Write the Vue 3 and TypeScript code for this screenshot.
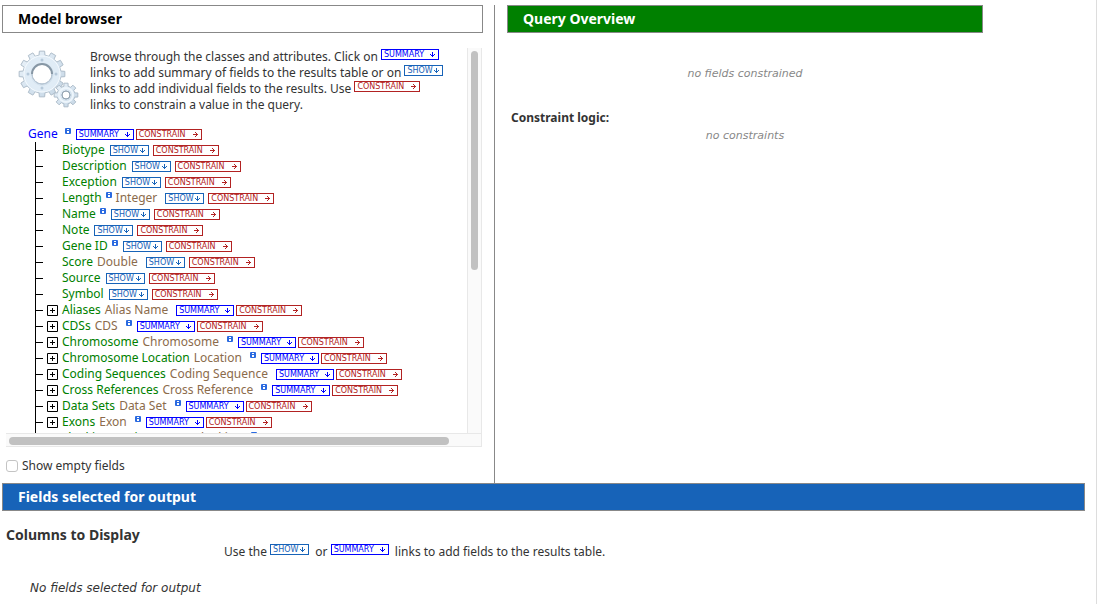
<script setup lang="ts">
import { h, type FunctionalComponent } from 'vue'

type Kind = 'summary' | 'show' | 'constrain'

interface TreeRow {
  name: string
  type?: string
  info?: 'name' | 'type'
  expandable?: boolean
}

const rows: TreeRow[] = [
  { name: 'Biotype' },
  { name: 'Description' },
  { name: 'Exception' },
  { name: 'Length', type: 'Integer', info: 'name' },
  { name: 'Name', info: 'name' },
  { name: 'Note' },
  { name: 'Gene ID', info: 'name' },
  { name: 'Score', type: 'Double' },
  { name: 'Source' },
  { name: 'Symbol' },
  { name: 'Aliases', type: 'Alias Name', expandable: true },
  { name: 'CDSs', type: 'CDS', info: 'type', expandable: true },
  { name: 'Chromosome', type: 'Chromosome', info: 'type', expandable: true },
  { name: 'Chromosome Location', type: 'Location', info: 'type', expandable: true },
  { name: 'Coding Sequences', type: 'Coding Sequence', expandable: true },
  { name: 'Cross References', type: 'Cross Reference', info: 'type', expandable: true },
  { name: 'Data Sets', type: 'Data Set', info: 'type', expandable: true },
  { name: 'Exons', type: 'Exon', info: 'type', expandable: true },
  { name: 'Flanking Regions', type: 'Gene Flanking', info: 'type', expandable: true },
]

const arrowPaths: Record<Kind, string> = {
  summary: 'M2 0h1v5h-1zM0 2h1v1h-1zM4 2h1v1h-1zM1 3h1v1h-1zM3 3h1v1h-1z',
  show: 'M2 0h1v5h-1zM0 2h1v1h-1zM4 2h1v1h-1zM1 3h1v1h-1zM3 3h1v1h-1z',
  constrain: 'M0 2h5v1h-5zM2 0h1v1h-1zM2 4h1v1h-1zM3 1h1v1h-1zM3 3h1v1h-1z',
}

const Tag: FunctionalComponent<{ kind: Kind; link?: boolean }> = (props) =>
  h(props.link ? 'a' : 'span', { class: ['tag', props.kind], href: props.link ? '#' : undefined }, [
    h('span', props.kind.toUpperCase()),
    h('svg', { width: 5, height: 5, viewBox: '0 0 5 5', 'aria-hidden': 'true' }, [
      h('path', { d: arrowPaths[props.kind], fill: 'currentColor' }),
    ]),
  ])
Tag.props = ['kind', 'link']

const InfoMark: FunctionalComponent = () =>
  h('svg', { class: 'info', width: 6, height: 6, viewBox: '0 0 6 6', role: 'img', 'aria-label': 'info' }, [
    h('rect', { width: 6, height: 6, rx: 1, fill: '#2a6ae0' }),
    h('path', { d: 'M2 1h2v1h-2zM2 3h2v2h-2z', fill: '#fff' }),
  ])

function gear(cx: number, cy: number, outer: number, inner: number, teeth: number): string {
  const points: string[] = []
  const step = (Math.PI * 2) / teeth
  for (let i = 0; i < teeth; i++) {
    const mid = i * step - Math.PI / 2
    const corners: [number, number][] = [
      [-0.3, inner],
      [-0.22, outer],
      [0.22, outer],
      [0.3, inner],
    ]
    for (const [offset, radius] of corners) {
      const angle = mid + offset * step
      points.push(`${(cx + Math.cos(angle) * radius).toFixed(2)} ${(cy + Math.sin(angle) * radius).toFixed(2)}`)
    }
  }
  return `M${points.join('L')}Z`
}

const bigGear = gear(24, 25, 23, 19, 12) + 'M34 25a10 10 0 1 0-20 0a10 10 0 1 0 20 0Z'
const smallGear = gear(48, 46, 12, 9, 8) + 'M52 46a4 4 0 1 0-8 0a4 4 0 1 0 8 0Z'
</script>

<template>
  <div class="page">
    <div class="top">
      <section class="model">
        <h2 class="bar">Model browser</h2>
        <div class="browser">
          <div class="view">
            <div class="intro">
              <svg class="gears" width="62" height="62" viewBox="0 0 62 62" aria-hidden="true">
                <defs>
                  <linearGradient id="steel" x1="0" y1="0" x2="1" y2="1">
                    <stop offset="0" stop-color="#eef5fb" />
                    <stop offset="0.5" stop-color="#d5e3ef" />
                    <stop offset="1" stop-color="#c6d6e4" />
                  </linearGradient>
                </defs>
                <g stroke-linejoin="round" fill-rule="evenodd">
                  <path :d="bigGear" fill="url(#steel)" stroke="#aebdca" />
                  <circle cx="24" cy="25" r="15" fill="none" stroke="#e0ecf6" stroke-width="7" />
                  <circle cx="24" cy="25" r="18" fill="none" stroke="#f5fafe" />
                  <path d="M14 25a10 10 0 0 0 20 0" fill="none" stroke="#b9c8d6" />
                  <path d="M14 25a10 10 0 1 1 20 0" fill="none" stroke="#8797a5" stroke-width="2" />
                  <g fill="#b6c9da">
                    <circle cx="24" cy="11" r="1.5" />
                    <circle cx="24" cy="39" r="1.5" />
                    <circle cx="10" cy="25" r="1.5" />
                    <circle cx="38" cy="25" r="1.5" />
                  </g>
                  <path :d="smallGear" fill="url(#steel)" stroke="#aebdca" />
                  <circle cx="48" cy="46" r="7" fill="none" stroke="#edf5fb" stroke-width="2" />
                  <circle cx="48" cy="46" r="4" fill="none" stroke="#94a4b2" />
                </g>
              </svg>
              <p>
                Browse through the classes and attributes. Click on <Tag kind="summary" /><br />
                links to add summary of fields to the results table or on <Tag kind="show" /><br />
                links to add individual fields to the results. Use <Tag kind="constrain" /><br />
                links to constrain a value in the query.
              </p>
            </div>
            <div class="root">
              <a href="#" class="class-name">Gene</a>
              <InfoMark />
              <span class="tags"><Tag kind="summary" link /><Tag kind="constrain" link /></span>
            </div>
            <ul class="tree">
              <li v-for="row in rows" :key="row.name">
                <span class="branch"></span>
                <span class="toggle-slot">
                  <button v-if="row.expandable" type="button" class="toggle" :aria-label="`Expand ${row.name}`">
                    <svg width="11" height="11" viewBox="0 0 11 11" aria-hidden="true">
                      <path d="M.5 .5h10v10h-10zM3 5.5h5M5.5 3v5" fill="none" stroke="#000" />
                    </svg>
                  </button>
                </span>
                <span class="field">{{ row.name }}</span>
                <InfoMark v-if="row.info === 'name'" />
                <span v-if="row.type" class="type">{{ row.type }}</span>
                <InfoMark v-if="row.info === 'type'" class="after-type" />
                <span class="tags" :class="{ wide: !row.expandable, far: row.type && row.info !== 'type' }">
                  <Tag :kind="row.expandable ? 'summary' : 'show'" link /><Tag kind="constrain" link />
                </span>
              </li>
            </ul>
          </div>
          <div class="track vertical"><div class="thumb"></div></div>
          <div class="track horizontal"><div class="thumb"></div></div>
        </div>
        <label class="empty"><input type="checkbox" />Show empty fields</label>
      </section>
      <section class="query">
        <h2 class="bar green">Query Overview</h2>
        <p class="none first">no fields constrained</p>
        <h3>Constraint logic:</h3>
        <p class="none">no constraints</p>
      </section>
    </div>
    <section class="output">
      <h2 class="bar blue">Fields selected for output</h2>
      <h3 class="columns">Columns to Display</h3>
      <p class="hint">Use the <Tag kind="show" />&nbsp; or <Tag kind="summary" />&nbsp; links to add fields to the results table.</p>
      <p class="nothing">No fields selected for output</p>
    </section>
  </div>
</template>

<style>
body {
  background: #fff;
}
</style>

<style scoped>
.page {
  box-sizing: border-box;
  min-height: 100vh;
  margin-right: 2px;
  padding: 5px 11px 0 2px;
  border-right: 1px solid #ddd;
  overflow: hidden;
  font: 12px/16px "Lucida Grande", "Noto Sans", "Open Sans", sans-serif;
  color: #333;
}
.page :is(h2, h3, p, ul) {
  margin: 0;
  padding: 0;
}
.top {
  display: grid;
  grid-template-columns: 493fr 590fr;
}
.model {
  padding-right: 11px;
  border-right: 1px solid #888;
}
.query {
  padding: 0 102px 0 12px;
}
.page .bar {
  padding: 4px 15px;
  border: 1px solid #888;
  color: #000;
  font-size: 14px;
  line-height: 18px;
}
.page .green {
  background: #008000;
  color: #fff;
}
.page .blue {
  background: #1763b8;
  color: #fff;
}
.browser {
  display: grid;
  grid-template-columns: 1fr 15px;
  grid-template-rows: 385px 14px;
  margin: 15px 1px 0 4px;
}
.view {
  overflow: hidden;
  white-space: nowrap;
}
.intro {
  display: flex;
  gap: 10px;
  height: 65px;
  padding-left: 12px;
}
.intro svg {
  flex: none;
}
.page .intro p {
  margin-top: 1px;
}
.gears {
  margin-top: 1px;
}
.page :deep(.tag) {
  display: inline-flex;
  box-sizing: border-box;
  align-items: center;
  justify-content: space-between;
  height: 11px;
  padding: 0 3px 0 2px;
  border: 1px solid;
  font: 8px/9px "DejaVu Sans", sans-serif;
  text-decoration: none;
  vertical-align: 4px;
}
.page :deep(.summary) {
  width: 58px;
  color: #00f;
}
.page :deep(.show) {
  width: 39px;
  color: #1763b8;
}
.page :deep(.constrain) {
  width: 66px;
  color: #b22222;
}
.root,
.tree li {
  display: flex;
  align-items: center;
  height: 16px;
}
.root {
  padding: 13px 0 0 22px;
}
.class-name {
  margin-right: 7px;
  color: #00f;
  text-decoration: none;
}
.info {
  flex: none;
  align-self: flex-start;
  margin: 2px 0 0 4px;
}
.root .info {
  margin-left: 0;
}
.tags {
  display: flex;
  gap: 2px;
  margin-left: 5px;
}
.tags.wide {
  gap: 4px;
}
.tags.far {
  margin-left: 8px;
}
.page .tree {
  margin-left: 29px;
  border-left: 1px solid #000;
  list-style: none;
}
.branch {
  width: 7px;
  height: 1px;
  background: #000;
}
.toggle-slot {
  display: flex;
  width: 15px;
  margin-left: 4px;
}
.toggle {
  display: flex;
  padding: 0;
  border: 0;
  background: none;
}
.field {
  color: #008000;
}
.type {
  margin-left: 4px;
  color: #8b6b4b;
}
.info.after-type {
  margin-left: 8px;
}
.track {
  box-sizing: border-box;
  background: #fafafa;
}
.vertical {
  padding: 3px 3px 0 3px;
  border: solid #e8e8e8;
  border-width: 0 1px;
}
.horizontal {
  grid-column: 1 / -1;
  padding: 3px 32px 0 3px;
  border: solid #e8e8e8;
  border-width: 1px 1px 1px 0;
}
.thumb {
  border-radius: 4px;
  background: #c1c1c1;
}
.vertical .thumb {
  height: 219px;
}
.horizontal .thumb {
  height: 8px;
}
.empty {
  display: flex;
  align-items: center;
  gap: 4px;
  margin: 11px 0 9px 4px;
}
.empty input {
  width: 12px;
  height: 12px;
  margin: 0;
  border: 1px solid #c4c4c4;
  border-radius: 3px;
  appearance: none;
}
.page .none {
  color: #888;
  font-family: "DejaVu Sans", sans-serif;
  font-size: 11px;
  font-style: italic;
  text-align: center;
}
.page .first {
  margin-top: 33px;
}
.query h3 {
  font-size: 12px;
}
.page .query h3 {
  margin: 28px 0 2px 4px;
}
.page .columns {
  margin: 15px 0 0 4px;
  font-size: 14px;
  line-height: 18px;
}
.page .hint {
  margin-left: 222px;
}
.page .nothing {
  margin: 20px 0 0 28px;
  font-family: "DejaVu Sans", sans-serif;
  font-style: italic;
}
</style>
